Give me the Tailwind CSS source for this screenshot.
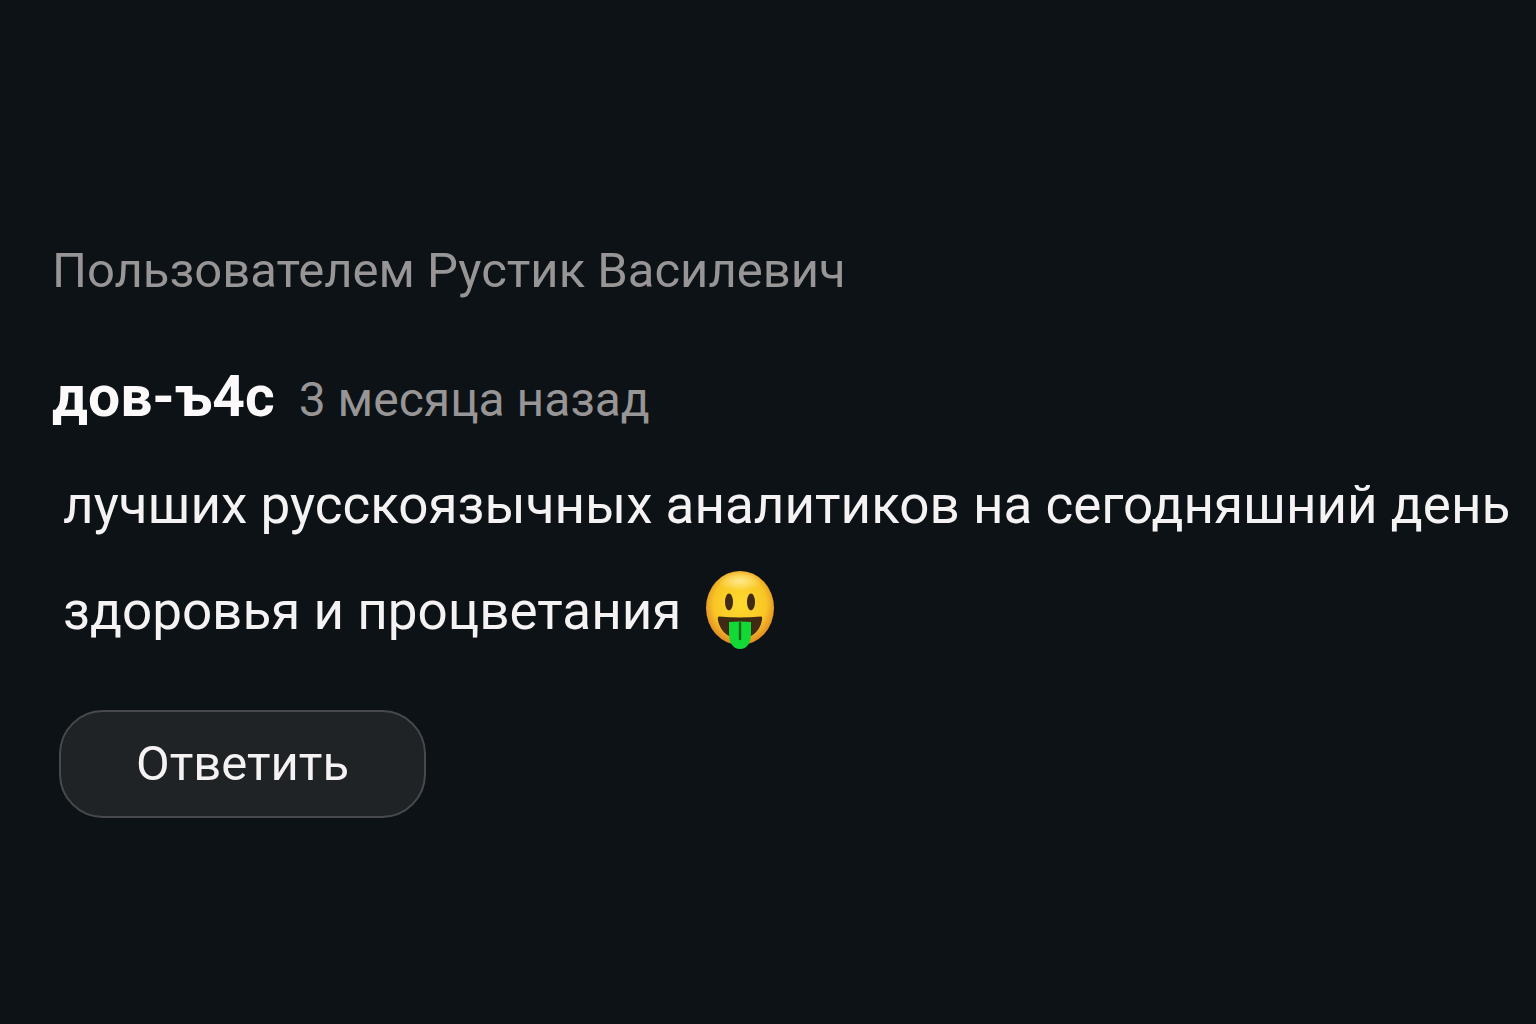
<!DOCTYPE html>
<html lang="ru">
<head>
  <meta charset="UTF-8" />
  <meta name="viewport" content="width=device-width, initial-scale=1.0" />
  <title>Комментарий</title>
  <script src="https://cdn.jsdelivr.net/npm/@tailwindcss/browser@4"></script>
</head>
<body class="min-h-screen bg-[#0d1216] font-['Roboto',sans-serif] text-[#f4f2f2]">
  <main class="px-13 pt-[235px] pb-12">
    <p class="text-[49px] leading-[72px] text-[#979595]">Пользователем Рустик Василевич</p>

    <article>
      <!-- Author and date -->
      <header class="mt-[50px] flex items-baseline gap-6 leading-[80px]">
        <h2 class="text-[57px] font-bold text-[#fbf9f9]">дов-ъ4с</h2>
        <time class="text-[48px] text-[#979595]">3 месяца назад</time>
      </header>

      <!-- Comment text -->
      <div class="mt-3 pl-[11px] text-[53px] leading-[106px]">
        <p class="whitespace-nowrap">лучших русскоязычных аналитиков на сегодняшний день</p>
        <p class="flex items-center gap-6">
          <span>здоровья и процветания</span>
          <svg class="h-20 w-[70px]" viewBox="0 0 70 80" role="img" aria-label="Смайлик с языком">
            <defs>
              <radialGradient id="face" cx="50%" cy="45%" r="55%">
                <stop offset="0" stop-color="#fddb2e" />
                <stop offset="0.7" stop-color="#f9c625" />
                <stop offset="1" stop-color="#dd8826" />
              </radialGradient>
              <radialGradient id="shine">
                <stop offset="0" stop-color="#fff3b0" stop-opacity="0.75" />
                <stop offset="1" stop-color="#fff3b0" stop-opacity="0" />
              </radialGradient>
            </defs>
            <ellipse cx="35" cy="37" rx="34" ry="37" fill="url(#face)" />
            <ellipse cx="35" cy="10" rx="22" ry="10" fill="url(#shine)" />
            <ellipse cx="24" cy="31" rx="4" ry="8.5" fill="#402a14" />
            <ellipse cx="46" cy="31" rx="4" ry="8.5" fill="#402a14" />
            <path d="M14 45.500Q35 47.500 56 45.500C58 45.500 57 50 56 53C52 64 44 67 35 67S18 64 14 53C13 50 12 45.500 14 45.500Z" fill="#402a14" />
            <path d="M24 51Q35 50 46 51V62C46 72 42 78 35 78S24 72 24 62Z" fill="#13d936" />
            <path d="M35 52V68" stroke="#07651c" stroke-width="2.4" stroke-linecap="round" />
          </svg>
        </p>
      </div>

      <button type="button" class="mt-[46px] ml-[7px] rounded-[44px] border-2 border-[#47494c] bg-[#202326] px-[75px] py-4 text-[49px] leading-[72px]">Ответить</button>
    </article>
  </main>
</body>
</html>
